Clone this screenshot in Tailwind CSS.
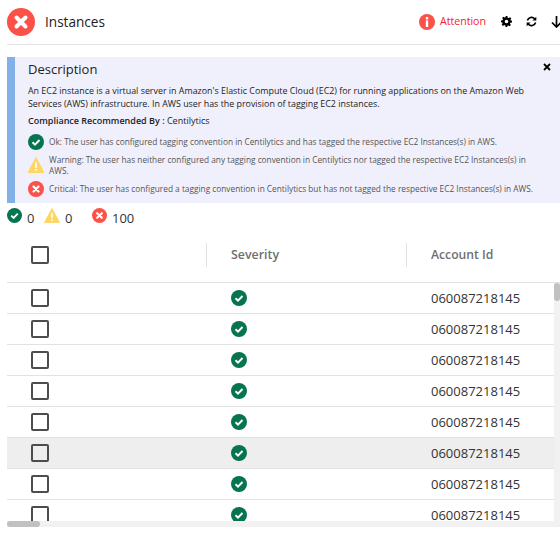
<!DOCTYPE html>
<html lang="en">
  <head>
    <meta charset="UTF-8" />
    <meta name="viewport" content="width=device-width, initial-scale=1.0" />
    <script src="https://cdn.jsdelivr.net/npm/@tailwindcss/browser@4"></script>
    <title>Instances</title>
  </head>
  <body class="bg-white font-['Open_Sans',sans-serif] overflow-hidden">
    <main class="w-[560px] h-[533px] pl-[7px] overflow-hidden">
      <!-- header -->
      <header class="flex items-center h-[45px] border-b border-[#e2e2e2] pb-[1px] overflow-hidden">
        <svg class="w-7 h-7 shrink-0" viewBox="0 0 28 28"><circle cx="14" cy="14" r="14" fill="#fb5148"/><path d="M9.5 9.5l9 9m0-9l-9 9" stroke="#fff" stroke-width="4" stroke-linecap="round"/></svg>
        <h1 class="ml-[10px] text-[13.6px] font-medium text-[#222] translate-y-[1px]">Instances</h1>
        <svg class="w-4 h-4 ml-auto shrink-0" viewBox="0 0 16 16"><circle cx="8" cy="8" r="8" fill="#fb5148"/><rect x="6.8" y="3" width="2.4" height="2.4" fill="#fff"/><rect x="6.8" y="6.4" width="2.4" height="6.6" fill="#fff"/></svg>
        <span class="ml-[5px] text-[10.6px] text-[#f5222d]">Attention</span>
        <svg class="w-[11px] h-[11px] ml-[15px] shrink-0" viewBox="0 0 24 24"><path fill="#000" fill-rule="evenodd" d="M10 0h4l.7 3.6 2.1.9 3-2 2.8 2.8-2 3 .9 2.1L24 10v4l-3.5.7-.9 2.1 2 3-2.8 2.8-3-2-2.1.9L14 24h-4l-.7-3.5-2.1-.9-3 2-2.8-2.8 2-3-.9-2.1L0 14v-4l3.5-.7.9-2.1-2-3 2.8-2.8 3 2 2.1-.9zM12 8a4 4 0 1 0 0 8 4 4 0 0 0 0-8z"/></svg>
        <svg class="w-[11px] h-[11px] ml-[14px] shrink-0" viewBox="0 0 24 24" fill="none" stroke="#000" stroke-width="3.4"><path d="M3 10a9.5 9.5 0 0 1 16-4l2 2"/><path d="M21 14a9.5 9.5 0 0 1-16 4l-2-2"/><path d="M22.5 1.5V10H14" fill="#000" stroke="none"/><path d="M1.5 22.500V14H10" fill="#000" stroke="none"/></svg>
        <svg class="w-[11px] h-[12px] ml-[14px] shrink-0 -mr-[2px]" viewBox="0 0 11 12" fill="none" stroke="#000" stroke-width="1.700"><path d="M5.500 0v11M1 6.500l4.500 4.500 4.500-4.500"/></svg>
      </header>

      <!-- description -->
      <section class="relative mt-3 h-[146px] bg-[#f0f0fc] border-l-[8px] border-[#82b1e8] pl-[13px] pr-[10px] pt-[3px]">
        <button class="absolute right-[9px] top-[6px]">
          <svg class="w-[8px] h-[8px]" viewBox="0 0 8 8"><path d="M1 1l6 6m0-6L1 7" stroke="#000" stroke-width="1.800"/></svg>
        </button>
        <h2 class="text-[13px] leading-[19px] text-[#222]">Description</h2>
        <p class="mt-[5px] text-[8.9px] leading-[13px] text-[#222]">An EC2 instance is a virtual server in Amazon's Elastic Compute Cloud (EC2) for running applications on the Amazon Web Services (AWS) infrastructure. In AWS user has the provision of tagging EC2 instances.</p>
        <p class="mt-[4px] text-[9px] leading-[14px] text-[#222]"><b class="font-semibold">Compliance Recommended By :</b> Centilytics</p>
        <div class="mt-[6px] flex items-center gap-[5px] h-[16px]">
          <svg class="w-4 h-4 shrink-0" viewBox="0 0 16 16"><circle cx="8" cy="8" r="8" fill="#05744f"/><path d="M4.500 8.200l2.500 2.400 4.500-4.600" fill="none" stroke="#fff" stroke-width="2"/></svg>
          <p class="text-[8.3px] text-[#555]">Ok: The user has configured tagging convention in Centilytics and has tagged the respective EC2 Instances(s) in AWS.</p>
        </div>
        <div class="mt-[4px] flex items-center gap-[5px]">
          <svg class="w-4 h-4 shrink-0" viewBox="0 0 16 16"><path d="M8 .5L16 15.500H0z" fill="#fdd666" stroke="#fdd666" stroke-linejoin="round"/><rect x="7.200" y="5.500" width="1.600" height="5.500" fill="#fff"/><rect x="7.200" y="12" width="1.600" height="1.700" fill="#fff"/></svg>
          <p class="max-w-[482px] text-[8.3px] leading-[11px] text-[#555]">Warning: The user has neither configured any tagging convention in Centilytics nor tagged the respective EC2 Instances(s) in AWS.</p>
        </div>
        <div class="mt-[5px] flex items-center gap-[5px] h-[16px]">
          <svg class="w-4 h-4 shrink-0" viewBox="0 0 16 16"><circle cx="8" cy="8" r="8" fill="#fb5148"/><path d="M5.500 5.500l5 5m0-5l-5 5" stroke="#fff" stroke-width="2.300" stroke-linecap="round"/></svg>
          <p class="text-[8.3px] text-[#555]">Critical: The user has configured a tagging convention in Centilytics but has not tagged the respective EC2 Instances(s) in AWS.</p>
        </div>
      </section>

      <!-- counts -->
      <div class="flex items-start h-[26px] pt-[5px] text-[13px] leading-[18px] text-[#333]">
        <svg class="w-[15px] h-[15px] shrink-0" viewBox="0 0 16 16"><circle cx="8" cy="8" r="8" fill="#05744f"/><path d="M4.500 8.200l2.500 2.400 4.500-4.600" fill="none" stroke="#fff" stroke-width="2"/></svg>
        <span class="ml-[5px] mt-[1px] w-[17px]">0</span>
        <svg class="w-[16px] h-[15px] shrink-0" viewBox="0 0 16 16"><path d="M8 .5L16 15.500H0z" fill="#fdd666" stroke="#fdd666" stroke-linejoin="round"/><rect x="7.200" y="5.500" width="1.600" height="5.500" fill="#fff"/><rect x="7.200" y="12" width="1.600" height="1.700" fill="#fff"/></svg>
        <span class="ml-[5px] mt-[1px] w-[27px]">0</span>
        <svg class="w-[15px] h-[15px] shrink-0" viewBox="0 0 16 16"><circle cx="8" cy="8" r="8" fill="#fb5148"/><path d="M5.500 5.500l5 5m0-5l-5 5" stroke="#fff" stroke-width="2.300" stroke-linecap="round"/></svg>
        <span class="ml-[5px] mt-[1px]">100</span>
      </div>

      <!-- table head -->
      <div class="grid grid-cols-[200px_200px_1fr] items-center h-[54px] border-b border-[#e2e2e2] pb-[1px]">
        <div class="flex items-center h-[24px] pl-[24px] border-r border-[#e2e2e2]"><span class="block w-[18px] h-[18px] rounded-[2px] border-2 border-[#4d4d4d]"></span></div>
        <div class="flex items-center h-[24px] pl-[24px] border-r border-[#e2e2e2] text-[12.4px] font-semibold text-[#6f6f6f]">Severity</div>
        <div class="pl-[24px] text-[12.2px] font-semibold text-[#6f6f6f]">Account Id</div>
      </div>

      <!-- table body -->
      <div class="flex h-[238px] overflow-hidden">
        <div class="w-[547px] shrink-0 text-[13px] text-[#333]">
          <div class="grid grid-cols-[200px_200px_1fr] items-center h-[31px] border-b border-[#e2e2e2]"><div class="pl-[24px]"><span class="block w-[18px] h-[18px] rounded-[2px] border-2 border-[#4d4d4d]"></span></div><div class="pl-[24px]"><svg class="w-4 h-4" viewBox="0 0 16 16"><circle cx="8" cy="8" r="8" fill="#05744f"/><path d="M4.500 8.200l2.500 2.400 4.500-4.600" fill="none" stroke="#fff" stroke-width="2"/></svg></div><div class="pl-[24px] pt-[2px]">060087218145</div></div>
          <div class="grid grid-cols-[200px_200px_1fr] items-center h-[31px] border-b border-[#e2e2e2]"><div class="pl-[24px]"><span class="block w-[18px] h-[18px] rounded-[2px] border-2 border-[#4d4d4d]"></span></div><div class="pl-[24px]"><svg class="w-4 h-4" viewBox="0 0 16 16"><circle cx="8" cy="8" r="8" fill="#05744f"/><path d="M4.500 8.200l2.500 2.400 4.500-4.600" fill="none" stroke="#fff" stroke-width="2"/></svg></div><div class="pl-[24px] pt-[2px]">060087218145</div></div>
          <div class="grid grid-cols-[200px_200px_1fr] items-center h-[31px] border-b border-[#e2e2e2]"><div class="pl-[24px]"><span class="block w-[18px] h-[18px] rounded-[2px] border-2 border-[#4d4d4d]"></span></div><div class="pl-[24px]"><svg class="w-4 h-4" viewBox="0 0 16 16"><circle cx="8" cy="8" r="8" fill="#05744f"/><path d="M4.500 8.200l2.500 2.400 4.500-4.600" fill="none" stroke="#fff" stroke-width="2"/></svg></div><div class="pl-[24px] pt-[2px]">060087218145</div></div>
          <div class="grid grid-cols-[200px_200px_1fr] items-center h-[31px] border-b border-[#e2e2e2]"><div class="pl-[24px]"><span class="block w-[18px] h-[18px] rounded-[2px] border-2 border-[#4d4d4d]"></span></div><div class="pl-[24px]"><svg class="w-4 h-4" viewBox="0 0 16 16"><circle cx="8" cy="8" r="8" fill="#05744f"/><path d="M4.500 8.200l2.500 2.400 4.500-4.600" fill="none" stroke="#fff" stroke-width="2"/></svg></div><div class="pl-[24px] pt-[2px]">060087218145</div></div>
          <div class="grid grid-cols-[200px_200px_1fr] items-center h-[31px] border-b border-[#e2e2e2]"><div class="pl-[24px]"><span class="block w-[18px] h-[18px] rounded-[2px] border-2 border-[#4d4d4d]"></span></div><div class="pl-[24px]"><svg class="w-4 h-4" viewBox="0 0 16 16"><circle cx="8" cy="8" r="8" fill="#05744f"/><path d="M4.500 8.200l2.500 2.400 4.500-4.600" fill="none" stroke="#fff" stroke-width="2"/></svg></div><div class="pl-[24px] pt-[2px]">060087218145</div></div>
          <div class="grid grid-cols-[200px_200px_1fr] items-center h-[31px] border-b border-[#e2e2e2] bg-[#eeeeee]"><div class="pl-[24px]"><span class="block w-[18px] h-[18px] rounded-[2px] border-2 border-[#4d4d4d]"></span></div><div class="pl-[24px]"><svg class="w-4 h-4" viewBox="0 0 16 16"><circle cx="8" cy="8" r="8" fill="#05744f"/><path d="M4.500 8.200l2.500 2.400 4.500-4.600" fill="none" stroke="#fff" stroke-width="2"/></svg></div><div class="pl-[24px] pt-[2px]">060087218145</div></div>
          <div class="grid grid-cols-[200px_200px_1fr] items-center h-[31px] border-b border-[#e2e2e2]"><div class="pl-[24px]"><span class="block w-[18px] h-[18px] rounded-[2px] border-2 border-[#4d4d4d]"></span></div><div class="pl-[24px]"><svg class="w-4 h-4" viewBox="0 0 16 16"><circle cx="8" cy="8" r="8" fill="#05744f"/><path d="M4.500 8.200l2.500 2.400 4.500-4.600" fill="none" stroke="#fff" stroke-width="2"/></svg></div><div class="pl-[24px] pt-[2px]">060087218145</div></div>
          <div class="grid grid-cols-[200px_200px_1fr] items-center h-[31px] border-b border-[#e2e2e2]"><div class="pl-[24px]"><span class="block w-[18px] h-[18px] rounded-[2px] border-2 border-[#4d4d4d]"></span></div><div class="pl-[24px]"><svg class="w-4 h-4" viewBox="0 0 16 16"><circle cx="8" cy="8" r="8" fill="#05744f"/><path d="M4.500 8.200l2.500 2.400 4.500-4.600" fill="none" stroke="#fff" stroke-width="2"/></svg></div><div class="pl-[24px] pt-[2px]">060087218145</div></div>
        </div>
        <div class="w-[6px] h-full bg-[#f1f1f1]"><div class="h-[18px] rounded-[3px] bg-[#c1c1c1]"></div></div>
      </div>

      <!-- horizontal scrollbar -->
      <div class="h-[6px] bg-[#f1f1f1]"><div class="w-[33px] h-full rounded-[3px] bg-[#c1c1c1]"></div></div>
    </main>
  </body>
</html>
